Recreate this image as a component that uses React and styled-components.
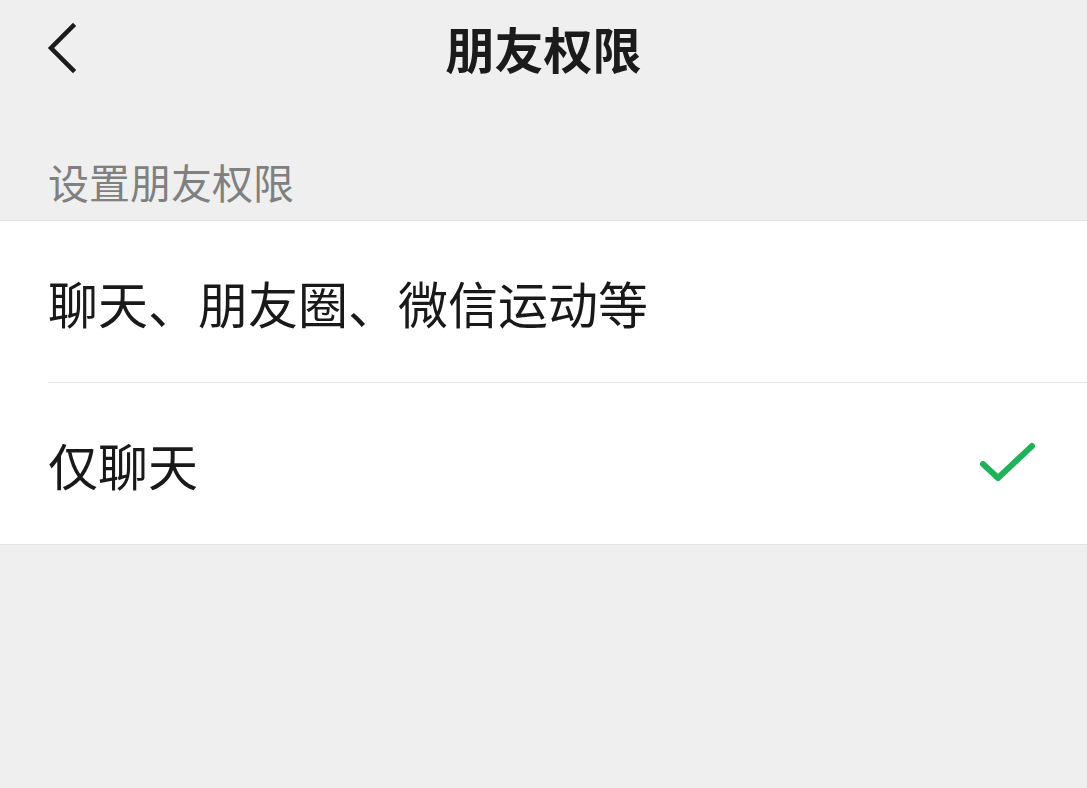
import React from "react";
import styled, { createGlobalStyle } from "styled-components";

const GlobalStyle = createGlobalStyle`
  html, body {
    margin: 0;
    padding: 0;
    background: #efefef;
    font-family: "Noto Sans CJK SC", "Noto Sans", sans-serif;
  }
`;

const Page = styled.div`
  width: 1087px;
  height: 788px;
  background: #efefef;
  overflow: hidden;
`;

const Header = styled.div`
  height: 100px;
  box-sizing: border-box;
  padding-bottom: 5px;
  display: grid;
  grid-template-columns: 100px 1fr 100px;
  align-items: center;
`;

const Back = styled.div`
  display: flex;
  align-items: center;
  padding-left: 45px;
`;

const Title = styled.h1`
  margin: 0;
  text-align: center;
  font-size: 49px;
  font-weight: 700;
  color: #1b1b1b;
  line-height: 1;
`;

const SectionLabel = styled.div`
  height: 120px;
  box-sizing: border-box;
  display: flex;
  align-items: flex-end;
  padding: 0 0 18px 48px;
  font-size: 41px;
  color: #808080;
  line-height: 1;
`;

const Card = styled.div`
  background: #fff;
  border-top: 1px solid #e3e3e3;
  border-bottom: 1px solid #e3e3e3;
`;

const Row = styled.div`
  height: 161px;
  display: flex;
  align-items: center;
  justify-content: space-between;
  margin-left: 48px;
  padding-right: 48px;
  font-size: 50px;
  color: #191919;
  border-bottom: ${(p) => (p.$last ? "none" : "1px solid #e6e6e6")};
`;

const Check = () => (
  <svg width="60" height="44" viewBox="0 0 60 44">
    <path
      d="M4 22 L19 36 L53 4"
      fill="none"
      stroke="#1fb25a"
      strokeWidth="6"
      strokeLinecap="round"
      strokeLinejoin="round"
    />
  </svg>
);

const Chevron = () => (
  <svg width="34" height="52" viewBox="0 0 34 52">
    <path
      d="M28 4 L6 26 L28 48"
      fill="none"
      stroke="#1b1b1b"
      strokeWidth="4.5"
      strokeLinecap="square"
    />
  </svg>
);

export default function App() {
  return (
    <Page>
      <GlobalStyle />
      <Header>
        <Back>
          <Chevron />
        </Back>
        <Title>朋友权限</Title>
        <div />
      </Header>
      <SectionLabel>设置朋友权限</SectionLabel>
      <Card>
        <Row>聊天、朋友圈、微信运动等</Row>
        <Row $last>
          <span>仅聊天</span>
          <Check />
        </Row>
      </Card>
    </Page>
  );
}
